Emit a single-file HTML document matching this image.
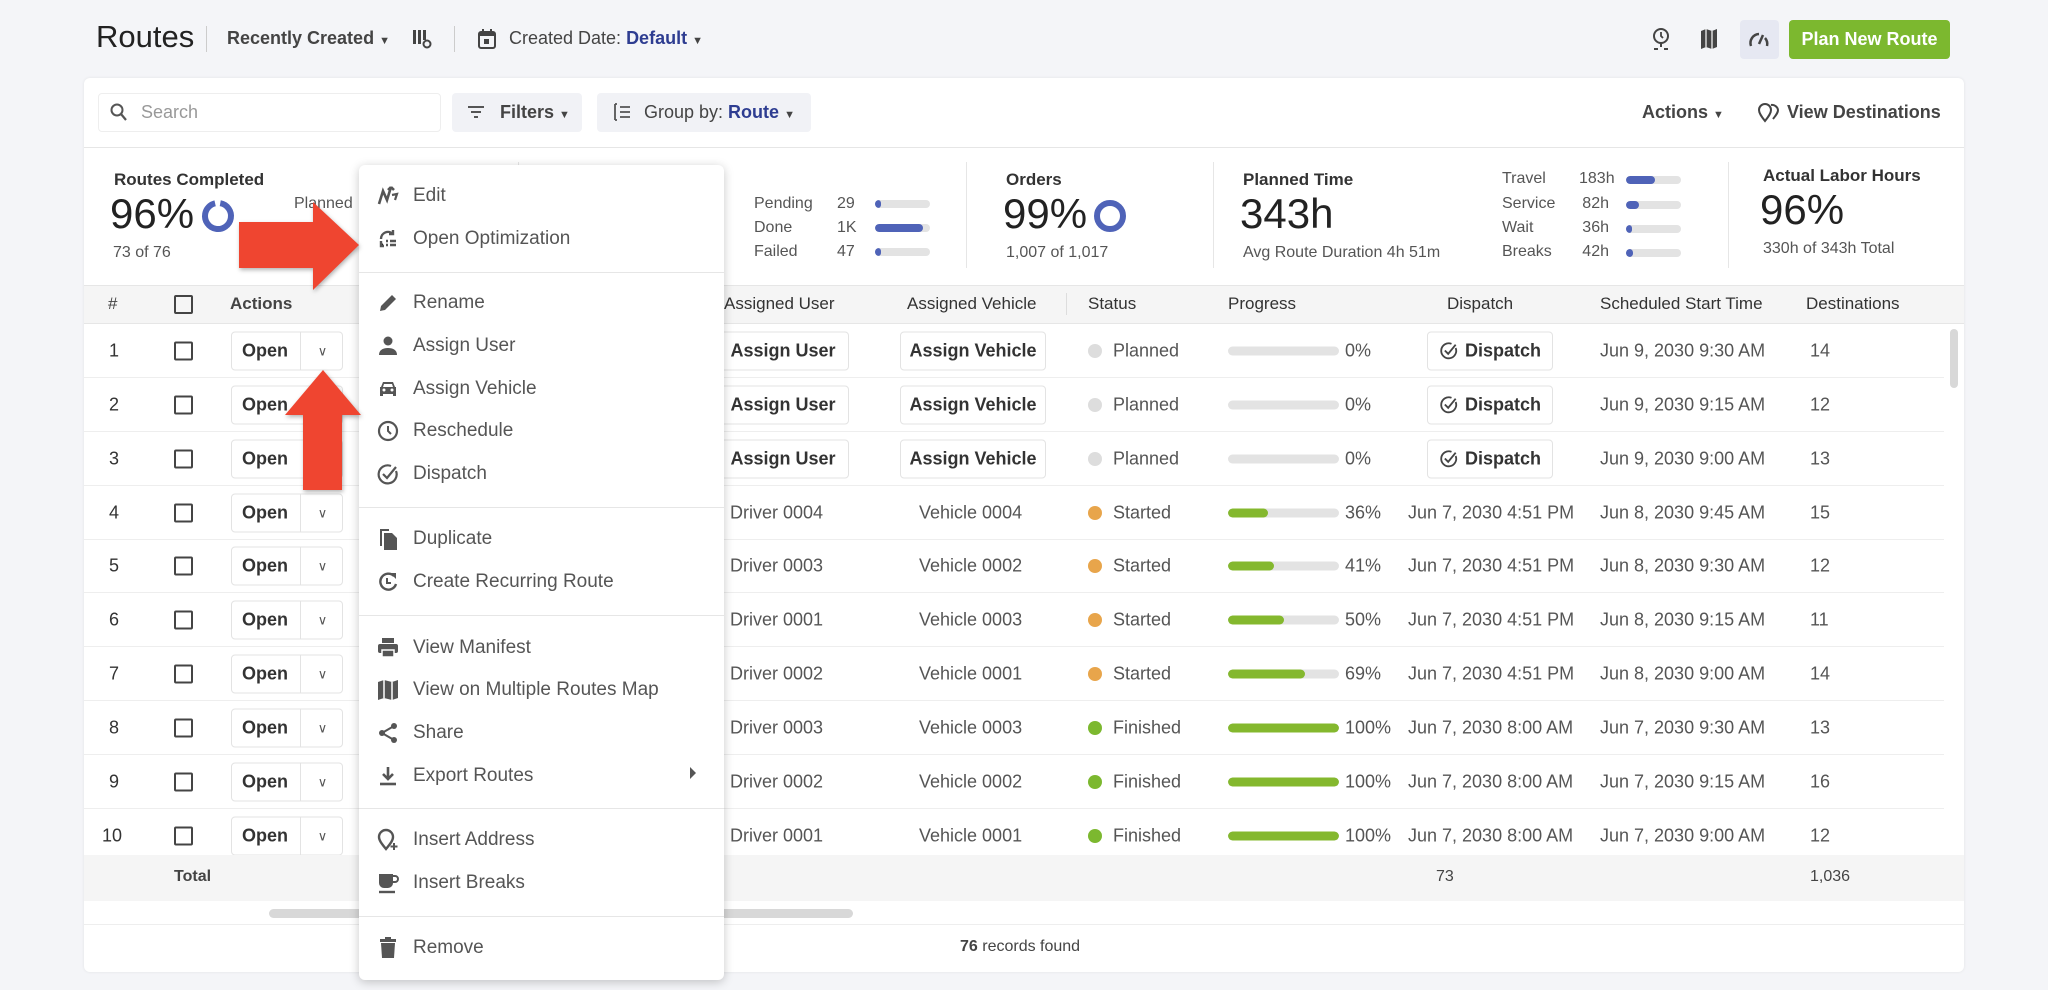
<!DOCTYPE html>
<html><head><meta charset="utf-8"><style>
*{box-sizing:border-box;margin:0;padding:0}
body{width:2048px;height:990px;background:#f4f5f8;font-family:"Liberation Sans",sans-serif;color:#333;position:relative;overflow:hidden;font-size:18px}
.a{position:absolute;white-space:nowrap}
.card{position:absolute;left:84px;top:78px;width:1880px;height:894px;background:#fff;border-radius:6px;box-shadow:0 0 3px rgba(0,0,0,.08)}
.btn{position:absolute;border:1px solid #e3e3e3;border-radius:4px;background:#fff;font-weight:bold;font-size:18px;display:flex;align-items:center;justify-content:center;color:#333}
.row{position:absolute;left:84px;width:1860px;height:54px;border-bottom:1px solid #eee}
.row>*{position:absolute;top:50%;transform:translateY(-50%);white-space:nowrap}
.cb{width:19px;height:19px;border:2px solid #444;border-radius:2px}
.bar{height:9px;border-radius:5px;background:#e3e3e3;overflow:hidden}
.bar i{display:block;height:100%;background:#84b82e;border-radius:5px}
.sb{height:8px;border-radius:4px;background:#e3e3e3;overflow:hidden}
.sb i{display:block;height:100%;background:#4f63b8;border-radius:4px}
.dot{width:14px;height:14px;border-radius:50%}
.mi{position:absolute;left:413px;font-size:19px;color:#555;transform:translateY(-50%)}
.ic{position:absolute;left:376px;transform:translateY(-50%);width:24px;height:24px}
.sep{position:absolute;left:359px;width:365px;height:1px;background:#e6e6e6}
.lbl{color:#555;font-size:16px}
.dsp{width:20px;height:20px;margin-right:6px}
</style></head><body>

<div class="a" style="left:96px;top:19px;font-size:31px;color:#222">Routes</div>
<div class="a" style="left:206px;top:26px;width:1px;height:26px;background:#ccc"></div>
<div class="a" style="left:227px;top:28px;font-size:18px;font-weight:bold;color:#444">Recently Created <span style="font-size:11px">▼</span></div>
<svg class="a" style="left:412px;top:28px" width="20" height="22" viewBox="0 0 20 22"><rect x="1" y="2" width="3" height="14" fill="#444"/><rect x="6" y="2" width="3" height="14" fill="#444"/><rect x="11" y="2" width="3" height="10" fill="#444"/><circle cx="15" cy="16" r="3.5" fill="none" stroke="#444" stroke-width="2"/></svg>
<div class="a" style="left:454px;top:26px;width:1px;height:26px;background:#ccc"></div>
<svg class="a" style="left:477px;top:28px" width="20" height="22" viewBox="0 0 20 22"><rect x="2" y="4" width="16" height="16" rx="2" fill="none" stroke="#444" stroke-width="2"/><rect x="2" y="4" width="16" height="4" fill="#444"/><rect x="5" y="1" width="2" height="5" fill="#444"/><rect x="13" y="1" width="2" height="5" fill="#444"/><rect x="7" y="11" width="5" height="5" fill="#444"/></svg>
<div class="a" style="left:509px;top:28px;font-size:18px;color:#444">Created Date: <b style="color:#2e3d91">Default</b> <span style="font-size:11px">▼</span></div>

<svg class="a" style="left:1650px;top:26px" width="22" height="26" viewBox="0 0 22 26"><circle cx="11" cy="10" r="7" fill="none" stroke="#444" stroke-width="2"/><path d="M11 6v4l2 2" stroke="#444" stroke-width="1.8" fill="none"/><path d="M11 17v4M4 23h4M14 23h4" stroke="#444" stroke-width="2"/></svg>
<svg class="a" style="left:1699px;top:28px" width="20" height="22" viewBox="0 0 20 22"><path d="M2 3l5-2 6 2 5-2v18l-5 2-6-2-5 2z" fill="#444"/><path d="M7 1v18M13 3v18" stroke="#fff" stroke-width="1.2"/></svg>
<div class="a" style="left:1740px;top:20px;width:39px;height:39px;background:#e6e8f2;border-radius:4px"></div>
<svg class="a" style="left:1748px;top:30px" width="22" height="18" viewBox="0 0 22 18"><path d="M3 16A9 9 0 0 1 11 4" stroke="#444" stroke-width="2.5" fill="none"/><path d="M11 14l4-9" stroke="#444" stroke-width="2.5"/><path d="M17 8a9 9 0 0 1 2 8" stroke="#444" stroke-width="2.5" fill="none"/></svg>
<div class="a" style="left:1789px;top:20px;width:161px;height:39px;background:#7cb82f;border-radius:4px;color:#fff;font-weight:bold;font-size:18px;display:flex;align-items:center;justify-content:center">Plan New Route</div>

<div class="card"></div>
<div class="a" style="left:98px;top:93px;width:343px;height:39px;border:1px solid #eee;border-radius:4px"></div>
<svg class="a" style="left:110px;top:103px" width="18" height="20" viewBox="0 0 18 20"><circle cx="7" cy="7" r="5.5" fill="none" stroke="#555" stroke-width="2"/><path d="M11 11l5 6" stroke="#555" stroke-width="2.2"/></svg>
<div class="a" style="left:141px;top:102px;color:#999;font-size:18px">Search</div>
<div class="a" style="left:452px;top:93px;width:130px;height:39px;background:#f1f2f6;border-radius:4px"></div>
<svg class="a" style="left:467px;top:105px" width="18" height="14" viewBox="0 0 18 14"><path d="M1 2h16M4 7h10M7 12h4" stroke="#555" stroke-width="2"/></svg>
<div class="a" style="left:500px;top:102px;font-weight:bold;color:#444">Filters <span style="font-size:11px">▼</span></div>
<div class="a" style="left:597px;top:93px;width:214px;height:39px;background:#f1f2f6;border-radius:4px"></div>
<svg class="a" style="left:613px;top:103px" width="18" height="18" viewBox="0 0 18 18"><path d="M2 1v16M2 1h2M2 17h2M7 4h10M7 9h10M7 14h10" stroke="#555" stroke-width="1.8"/></svg>
<div class="a" style="left:644px;top:102px;color:#444">Group by: <b style="color:#2e3d91">Route</b> <span style="font-size:11px">▼</span></div>
<div class="a" style="left:1642px;top:102px;font-weight:bold;color:#444">Actions <span style="font-size:11px">▼</span></div>
<svg class="a" style="left:1757px;top:101px" width="24" height="22" viewBox="0 0 24 22"><path d="M8 20c-4-5-6-8-6-11a6 6 0 0 1 12 0c0 3-2 6-6 11z" fill="none" stroke="#444" stroke-width="2"/><path d="M14 4a6 6 0 0 1 7 5c0 3-2 5-5 9" fill="none" stroke="#444" stroke-width="2"/></svg>
<div class="a" style="left:1787px;top:102px;font-weight:bold;color:#444">View Destinations</div>
<div class="a" style="left:84px;top:147px;width:1880px;height:1px;background:#e6e6e6"></div>

<div class="a" style="left:114px;top:170px;font-size:17px;font-weight:bold;color:#333">Routes Completed</div>
<div class="a" style="left:110px;top:190px;font-size:42px;color:#222">96%</div>
<svg class="a" style="left:200px;top:198px" width="36" height="36"><circle cx="18" cy="18" r="13" fill="none" stroke="#4f63b8" stroke-width="6" stroke-dasharray="76 6" transform="rotate(-80 18 18)"/></svg>
<div class="a lbl" style="left:113px;top:244px">73 of 76</div>
<div class="a lbl" style="left:294px;top:195px">Planned</div>
<div class="a" style="left:518px;top:162px;width:1px;height:106px;background:#e6e6e6"></div>
<div class="a lbl" style="left:754px;top:195px">Pending</div><div class="a lbl" style="left:837px;top:195px">29</div><div class="a sb" style="left:875px;top:200px;width:55px"><i style="width:10%"></i></div>
<div class="a lbl" style="left:754px;top:219px">Done</div><div class="a lbl" style="left:837px;top:219px">1K</div><div class="a sb" style="left:875px;top:224px;width:55px"><i style="width:88%"></i></div>
<div class="a lbl" style="left:754px;top:243px">Failed</div><div class="a lbl" style="left:837px;top:243px">47</div><div class="a sb" style="left:875px;top:248px;width:55px"><i style="width:10%"></i></div>
<div class="a" style="left:966px;top:162px;width:1px;height:106px;background:#e6e6e6"></div>
<div class="a" style="left:1006px;top:170px;font-size:17px;font-weight:bold">Orders</div>
<div class="a" style="left:1003px;top:190px;font-size:42px;color:#222">99%</div>
<svg class="a" style="left:1092px;top:198px" width="36" height="36"><circle cx="18" cy="18" r="13" fill="none" stroke="#4f63b8" stroke-width="6"/></svg>
<div class="a lbl" style="left:1006px;top:244px">1,007 of 1,017</div>
<div class="a" style="left:1213px;top:162px;width:1px;height:106px;background:#e6e6e6"></div>
<div class="a" style="left:1243px;top:170px;font-size:17px;font-weight:bold">Planned Time</div>
<div class="a" style="left:1240px;top:190px;font-size:42px;color:#222">343h</div>
<div class="a lbl" style="left:1243px;top:244px">Avg Route Duration 4h 51m</div>
<div class="a lbl" style="left:1502px;top:170px">Travel</div><div class="a lbl" style="left:1579px;top:170px;width:30px;text-align:right">183h</div><div class="a sb" style="left:1626px;top:176px;width:55px"><i style="width:52%"></i></div>
<div class="a lbl" style="left:1502px;top:195px">Service</div><div class="a lbl" style="left:1579px;top:195px;width:30px;text-align:right">82h</div><div class="a sb" style="left:1626px;top:201px;width:55px"><i style="width:24%"></i></div>
<div class="a lbl" style="left:1502px;top:219px">Wait</div><div class="a lbl" style="left:1579px;top:219px;width:30px;text-align:right">36h</div><div class="a sb" style="left:1626px;top:225px;width:55px"><i style="width:10%"></i></div>
<div class="a lbl" style="left:1502px;top:243px">Breaks</div><div class="a lbl" style="left:1579px;top:243px;width:30px;text-align:right">42h</div><div class="a sb" style="left:1626px;top:249px;width:55px"><i style="width:12%"></i></div>
<div class="a" style="left:1728px;top:162px;width:1px;height:106px;background:#e6e6e6"></div>
<div class="a" style="left:1763px;top:166px;font-size:17px;font-weight:bold">Actual Labor Hours</div>
<div class="a" style="left:1760px;top:186px;font-size:42px;color:#222">96%</div>
<div class="a lbl" style="left:1763px;top:240px">330h of 343h Total</div>

<div class="a" style="left:84px;top:285px;width:1880px;height:39px;background:#f5f5f5;border-top:1px solid #e6e6e6;border-bottom:1px solid #e6e6e6"></div>
<div class="a" style="left:108px;top:294px;font-size:17px;color:#444">#</div>
<div class="a cb" style="left:174px;top:295px"></div>
<div class="a" style="left:230px;top:294px;font-size:17px;font-weight:bold;color:#444">Actions</div>
<div class="a" style="left:724px;top:294px;font-size:17px;color:#333">Assigned User</div>
<div class="a" style="left:907px;top:294px;font-size:17px;color:#333">Assigned Vehicle</div>
<div class="a" style="left:1066px;top:293px;width:1px;height:22px;background:#ddd"></div>
<div class="a" style="left:1088px;top:294px;font-size:17px;color:#333">Status</div>
<div class="a" style="left:1228px;top:294px;font-size:17px;color:#333">Progress</div>
<div class="a" style="left:1447px;top:294px;font-size:17px;color:#333">Dispatch</div>
<div class="a" style="left:1600px;top:294px;font-size:17px;color:#333">Scheduled Start Time</div>
<div class="a" style="left:1806px;top:294px;font-size:17px;color:#333">Destinations</div>

<div class="row" style="top:324px"><span style="left:25px">1</span><span class="cb" style="left:90px"></span><span class="btn" style="left:147px;width:112px;height:39px;justify-content:flex-start;padding-left:10px">Open<span style="position:absolute;left:68px;top:0;bottom:0;border-left:1px solid #e3e3e3;width:44px;text-align:center;line-height:37px;font-weight:normal;font-size:13px;color:#555">∨</span></span><span class="btn" style="left:633px;width:132px;height:39px">Assign User</span><span class="btn" style="left:816px;width:146px;height:39px">Assign Vehicle</span><span class="dot" style="left:1004px;background:#ddd"></span><span style="left:1029px;color:#555">Planned</span><span class="bar" style="left:1144px;width:111px"><i style="width:0"></i></span><span style="left:1261px;color:#555">0%</span><span class="btn" style="left:1343px;width:126px;height:39px"><svg class="dsp" viewBox="0 0 24 24"><path d="M20 9a9 9 0 1 1-5-5" fill="none" stroke="#444" stroke-width="2.2"/><path d="M7 12l4 4 9-11" stroke="#444" stroke-width="2.2" fill="none"/></svg>Dispatch</span><span style="left:1516px;color:#555">Jun 9, 2030 9:30 AM</span><span style="left:1726px;color:#555">14</span></div>
<div class="row" style="top:378px"><span style="left:25px">2</span><span class="cb" style="left:90px"></span><span class="btn" style="left:147px;width:112px;height:39px;justify-content:flex-start;padding-left:10px">Open</span><span class="btn" style="left:633px;width:132px;height:39px">Assign User</span><span class="btn" style="left:816px;width:146px;height:39px">Assign Vehicle</span><span class="dot" style="left:1004px;background:#ddd"></span><span style="left:1029px;color:#555">Planned</span><span class="bar" style="left:1144px;width:111px"></span><span style="left:1261px;color:#555">0%</span><span class="btn" style="left:1343px;width:126px;height:39px"><svg class="dsp" viewBox="0 0 24 24"><path d="M20 9a9 9 0 1 1-5-5" fill="none" stroke="#444" stroke-width="2.2"/><path d="M7 12l4 4 9-11" stroke="#444" stroke-width="2.2" fill="none"/></svg>Dispatch</span><span style="left:1516px;color:#555">Jun 9, 2030 9:15 AM</span><span style="left:1726px;color:#555">12</span></div>
<div class="row" style="top:432px"><span style="left:25px">3</span><span class="cb" style="left:90px"></span><span class="btn" style="left:147px;width:112px;height:39px;justify-content:flex-start;padding-left:10px">Open</span><span class="btn" style="left:633px;width:132px;height:39px">Assign User</span><span class="btn" style="left:816px;width:146px;height:39px">Assign Vehicle</span><span class="dot" style="left:1004px;background:#ddd"></span><span style="left:1029px;color:#555">Planned</span><span class="bar" style="left:1144px;width:111px"></span><span style="left:1261px;color:#555">0%</span><span class="btn" style="left:1343px;width:126px;height:39px"><svg class="dsp" viewBox="0 0 24 24"><path d="M20 9a9 9 0 1 1-5-5" fill="none" stroke="#444" stroke-width="2.2"/><path d="M7 12l4 4 9-11" stroke="#444" stroke-width="2.2" fill="none"/></svg>Dispatch</span><span style="left:1516px;color:#555">Jun 9, 2030 9:00 AM</span><span style="left:1726px;color:#555">13</span></div>
<div class="row" style="top:486px"><span style="left:25px">4</span><span class="cb" style="left:90px"></span><span class="btn" style="left:147px;width:112px;height:39px;justify-content:flex-start;padding-left:10px">Open<span style="position:absolute;left:68px;top:0;bottom:0;border-left:1px solid #e3e3e3;width:44px;text-align:center;line-height:37px;font-weight:normal;font-size:13px;color:#555">∨</span></span><span style="left:646px;color:#555">Driver 0004</span><span style="left:835px;color:#555">Vehicle 0004</span><span class="dot" style="left:1004px;background:#e8a54b"></span><span style="left:1029px;color:#555">Started</span><span class="bar" style="left:1144px;width:111px"><i style="width:36%"></i></span><span style="left:1261px;color:#555">36%</span><span style="left:1324px;color:#555">Jun 7, 2030 4:51 PM</span><span style="left:1516px;color:#555">Jun 8, 2030 9:45 AM</span><span style="left:1726px;color:#555">15</span></div>
<div class="row" style="top:539px"><span style="left:25px">5</span><span class="cb" style="left:90px"></span><span class="btn" style="left:147px;width:112px;height:39px;justify-content:flex-start;padding-left:10px">Open<span style="position:absolute;left:68px;top:0;bottom:0;border-left:1px solid #e3e3e3;width:44px;text-align:center;line-height:37px;font-weight:normal;font-size:13px;color:#555">∨</span></span><span style="left:646px;color:#555">Driver 0003</span><span style="left:835px;color:#555">Vehicle 0002</span><span class="dot" style="left:1004px;background:#e8a54b"></span><span style="left:1029px;color:#555">Started</span><span class="bar" style="left:1144px;width:111px"><i style="width:41%"></i></span><span style="left:1261px;color:#555">41%</span><span style="left:1324px;color:#555">Jun 7, 2030 4:51 PM</span><span style="left:1516px;color:#555">Jun 8, 2030 9:30 AM</span><span style="left:1726px;color:#555">12</span></div>
<div class="row" style="top:593px"><span style="left:25px">6</span><span class="cb" style="left:90px"></span><span class="btn" style="left:147px;width:112px;height:39px;justify-content:flex-start;padding-left:10px">Open<span style="position:absolute;left:68px;top:0;bottom:0;border-left:1px solid #e3e3e3;width:44px;text-align:center;line-height:37px;font-weight:normal;font-size:13px;color:#555">∨</span></span><span style="left:646px;color:#555">Driver 0001</span><span style="left:835px;color:#555">Vehicle 0003</span><span class="dot" style="left:1004px;background:#e8a54b"></span><span style="left:1029px;color:#555">Started</span><span class="bar" style="left:1144px;width:111px"><i style="width:50%"></i></span><span style="left:1261px;color:#555">50%</span><span style="left:1324px;color:#555">Jun 7, 2030 4:51 PM</span><span style="left:1516px;color:#555">Jun 8, 2030 9:15 AM</span><span style="left:1726px;color:#555">11</span></div>
<div class="row" style="top:647px"><span style="left:25px">7</span><span class="cb" style="left:90px"></span><span class="btn" style="left:147px;width:112px;height:39px;justify-content:flex-start;padding-left:10px">Open<span style="position:absolute;left:68px;top:0;bottom:0;border-left:1px solid #e3e3e3;width:44px;text-align:center;line-height:37px;font-weight:normal;font-size:13px;color:#555">∨</span></span><span style="left:646px;color:#555">Driver 0002</span><span style="left:835px;color:#555">Vehicle 0001</span><span class="dot" style="left:1004px;background:#e8a54b"></span><span style="left:1029px;color:#555">Started</span><span class="bar" style="left:1144px;width:111px"><i style="width:69%"></i></span><span style="left:1261px;color:#555">69%</span><span style="left:1324px;color:#555">Jun 7, 2030 4:51 PM</span><span style="left:1516px;color:#555">Jun 8, 2030 9:00 AM</span><span style="left:1726px;color:#555">14</span></div>
<div class="row" style="top:701px"><span style="left:25px">8</span><span class="cb" style="left:90px"></span><span class="btn" style="left:147px;width:112px;height:39px;justify-content:flex-start;padding-left:10px">Open<span style="position:absolute;left:68px;top:0;bottom:0;border-left:1px solid #e3e3e3;width:44px;text-align:center;line-height:37px;font-weight:normal;font-size:13px;color:#555">∨</span></span><span style="left:646px;color:#555">Driver 0003</span><span style="left:835px;color:#555">Vehicle 0003</span><span class="dot" style="left:1004px;background:#7cb82f"></span><span style="left:1029px;color:#555">Finished</span><span class="bar" style="left:1144px;width:111px"><i style="width:100%"></i></span><span style="left:1261px;color:#555">100%</span><span style="left:1324px;color:#555">Jun 7, 2030 8:00 AM</span><span style="left:1516px;color:#555">Jun 7, 2030 9:30 AM</span><span style="left:1726px;color:#555">13</span></div>
<div class="row" style="top:755px"><span style="left:25px">9</span><span class="cb" style="left:90px"></span><span class="btn" style="left:147px;width:112px;height:39px;justify-content:flex-start;padding-left:10px">Open<span style="position:absolute;left:68px;top:0;bottom:0;border-left:1px solid #e3e3e3;width:44px;text-align:center;line-height:37px;font-weight:normal;font-size:13px;color:#555">∨</span></span><span style="left:646px;color:#555">Driver 0002</span><span style="left:835px;color:#555">Vehicle 0002</span><span class="dot" style="left:1004px;background:#7cb82f"></span><span style="left:1029px;color:#555">Finished</span><span class="bar" style="left:1144px;width:111px"><i style="width:100%"></i></span><span style="left:1261px;color:#555">100%</span><span style="left:1324px;color:#555">Jun 7, 2030 8:00 AM</span><span style="left:1516px;color:#555">Jun 7, 2030 9:15 AM</span><span style="left:1726px;color:#555">16</span></div>
<div class="row" style="top:809px"><span style="left:18px">10</span><span class="cb" style="left:90px"></span><span class="btn" style="left:147px;width:112px;height:39px;justify-content:flex-start;padding-left:10px">Open<span style="position:absolute;left:68px;top:0;bottom:0;border-left:1px solid #e3e3e3;width:44px;text-align:center;line-height:37px;font-weight:normal;font-size:13px;color:#555">∨</span></span><span style="left:646px;color:#555">Driver 0001</span><span style="left:835px;color:#555">Vehicle 0001</span><span class="dot" style="left:1004px;background:#7cb82f"></span><span style="left:1029px;color:#555">Finished</span><span class="bar" style="left:1144px;width:111px"><i style="width:100%"></i></span><span style="left:1261px;color:#555">100%</span><span style="left:1324px;color:#555">Jun 7, 2030 8:00 AM</span><span style="left:1516px;color:#555">Jun 7, 2030 9:00 AM</span><span style="left:1726px;color:#555">12</span></div>

<div class="a" style="left:84px;top:855px;width:1880px;height:46px;background:#f5f5f5"></div>
<div class="a" style="left:174px;top:868px;font-size:16px;font-weight:bold;color:#444">Total</div>
<div class="a" style="left:1436px;top:868px;font-size:16px;color:#444">73</div>
<div class="a" style="left:1810px;top:868px;font-size:16px;color:#444">1,036</div>
<div class="a" style="left:269px;top:909px;width:584px;height:9px;border-radius:5px;background:#d8d8d8"></div>
<div class="a" style="left:1950px;top:329px;width:8px;height:59px;border-radius:4px;background:#d8d8d8"></div>
<div class="a" style="left:84px;top:924px;width:1880px;height:1px;background:#eee"></div>
<div class="a" style="left:960px;top:938px;font-size:16px;color:#444"><b>76</b> records found</div>

<div class="a" style="left:359px;top:165px;width:365px;height:815px;background:#fff;border-radius:6px;box-shadow:0 2px 10px rgba(0,0,0,.22)"></div>
<svg class="ic" style="top:196px" viewBox="0 0 24 24"><path d="M3 20l4-13 4 9 4-13M15 3l3 3M15 3l-3 3" stroke="#555" stroke-width="2.6" fill="none"/><path d="M16 11l5-1-2 6" stroke="#555" stroke-width="2.2" fill="none"/></svg><div class="mi" style="top:196px">Edit</div>
<svg class="ic" style="top:239px" viewBox="0 0 24 24"><path d="M5 12a7 7 0 0 1 12-5M17 3v4h-4" stroke="#555" stroke-width="2.4" fill="none"/><path d="M5 14v5h3M10 14h2M14 14h6M10 18h2M14 18h6" stroke="#555" stroke-width="2.4"/></svg><div class="mi" style="top:239px">Open Optimization</div>
<div class="sep" style="top:272px"></div>
<svg class="ic" style="top:303px" viewBox="0 0 24 24"><path d="M4 20l1-5L16 4l4 4L9 19z" fill="#555"/></svg><div class="mi" style="top:303px">Rename</div>
<svg class="ic" style="top:346px" viewBox="0 0 24 24"><circle cx="12" cy="7" r="4.5" fill="#555"/><path d="M3 21c0-5 4-7 9-7s9 2 9 7z" fill="#555"/></svg><div class="mi" style="top:346px">Assign User</div>
<svg class="ic" style="top:389px" viewBox="0 0 24 24"><path d="M5 10l2-5h10l2 5h1v9h-3v-2H7v2H4v-9z" fill="#555"/><circle cx="8" cy="13" r="1.5" fill="#fff"/><circle cx="16" cy="13" r="1.5" fill="#fff"/><path d="M7 10l1-3h8l1 3z" fill="#fff"/></svg><div class="mi" style="top:389px">Assign Vehicle</div>
<svg class="ic" style="top:431px" viewBox="0 0 24 24"><circle cx="12" cy="12" r="9" fill="none" stroke="#555" stroke-width="2.2"/><path d="M12 7v5l3 3" stroke="#555" stroke-width="2" fill="none"/></svg><div class="mi" style="top:431px">Reschedule</div>
<svg class="ic" style="top:474px" viewBox="0 0 24 24"><path d="M20 9a9 9 0 1 1-5-5" fill="none" stroke="#555" stroke-width="2.2"/><path d="M7 12l4 4 9-11" stroke="#555" stroke-width="2.2" fill="none"/></svg><div class="mi" style="top:474px">Dispatch</div>
<div class="sep" style="top:507px"></div>
<svg class="ic" style="top:539px" viewBox="0 0 24 24"><path d="M4 2h9v2H6v15H4z" fill="#555"/><path d="M8 6h8l5 5v12H8z" fill="#555"/></svg><div class="mi" style="top:539px">Duplicate</div>
<svg class="ic" style="top:582px" viewBox="0 0 24 24"><path d="M18 6a8 8 0 1 0 2 8" fill="none" stroke="#555" stroke-width="2.4"/><path d="M14 3h6v6z" fill="#555"/><path d="M11 8v5h4" stroke="#555" stroke-width="2" fill="none"/></svg><div class="mi" style="top:582px">Create Recurring Route</div>
<div class="sep" style="top:615px"></div>
<svg class="ic" style="top:648px" viewBox="0 0 24 24"><rect x="6" y="2" width="12" height="5" fill="#555"/><rect x="2" y="8" width="20" height="9" rx="2" fill="#555"/><rect x="6" y="14" width="12" height="7" fill="#555" stroke="#fff" stroke-width="1.5"/></svg><div class="mi" style="top:648px">View Manifest</div>
<svg class="ic" style="top:690px" viewBox="0 0 24 24"><path d="M2 4l6-2 8 2 6-2v18l-6 2-8-2-6 2z" fill="#555"/><path d="M8 2v18M16 4v18" stroke="#fff" stroke-width="1.5"/></svg><div class="mi" style="top:690px">View on Multiple Routes Map</div>
<svg class="ic" style="top:733px" viewBox="0 0 24 24"><circle cx="18" cy="5" r="3" fill="#555"/><circle cx="6" cy="12" r="3" fill="#555"/><circle cx="18" cy="19" r="3" fill="#555"/><path d="M18 5L6 12l12 7" stroke="#555" stroke-width="2" fill="none"/></svg><div class="mi" style="top:733px">Share</div>
<svg class="ic" style="top:776px" viewBox="0 0 24 24"><path d="M12 3v12M7 10l5 5 5-5" stroke="#555" stroke-width="2.6" fill="none"/><path d="M4 20h16" stroke="#555" stroke-width="2.6"/></svg><div class="mi" style="top:776px">Export Routes</div>
<div class="a" style="left:690px;top:767px;width:0;height:0;border-left:6px solid #555;border-top:6px solid transparent;border-bottom:6px solid transparent"></div>
<div class="sep" style="top:808px"></div>
<svg class="ic" style="top:840px" viewBox="0 0 24 24"><path d="M10 21c-5-6-7-9-7-12a7 7 0 0 1 14 0c0 3-2 6-7 12z" fill="none" stroke="#555" stroke-width="2.4"/><path d="M18 15v7M14.5 18.5h7" stroke="#555" stroke-width="2"/></svg><div class="mi" style="top:840px">Insert Address</div>
<svg class="ic" style="top:883px" viewBox="0 0 24 24"><path d="M3 3h14v9a5 5 0 0 1-5 5H8a5 5 0 0 1-5-5z" fill="#555"/><path d="M17 5h2a3 3 0 0 1 0 6h-2" stroke="#555" stroke-width="2" fill="none"/><path d="M3 21h16" stroke="#555" stroke-width="2.4"/></svg><div class="mi" style="top:883px">Insert Breaks</div>
<div class="sep" style="top:916px"></div>
<svg class="ic" style="top:948px" viewBox="0 0 24 24"><rect x="4" y="3" width="16" height="3" fill="#555"/><rect x="9" y="1" width="6" height="3" fill="#555"/><path d="M5 7h14l-1 15H6z" fill="#555"/></svg><div class="mi" style="top:948px">Remove</div>

<svg class="a" style="left:230px;top:195px;filter:drop-shadow(1px 2px 2px rgba(0,0,0,.3))" width="135" height="105"><path d="M9 27h74V7l46 43-46 45V73H9z" fill="#ef4530"/></svg>
<svg class="a" style="left:278px;top:360px;filter:drop-shadow(1px 2px 2px rgba(0,0,0,.3))" width="90" height="135"><path d="M45 10l38 45H64v75H25V55H7z" fill="#ef4530"/></svg>
</body></html>
